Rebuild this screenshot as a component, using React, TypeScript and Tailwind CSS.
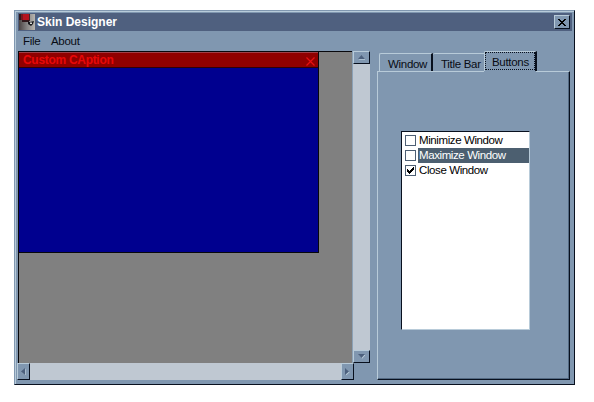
import React from "react";

const raised =
  "border border-t-[#b8cbd9] border-l-[#b8cbd9] border-r-[#08101e] border-b-[#08101e] bg-[#8097b0]";

function ScrollButton({ size, points }: { size: string; points: string }) {
  return (
    <button className={`flex shrink-0 items-center justify-center ${raised} ${size}`}>
      <svg width="7" height="7" viewBox="0 0 7 7" className="shrink-0">
        <polygon points={points} fill="#b8cbd9" transform="translate(.7 .7)" />
        <polygon points={points} fill="#4c607d" />
      </svg>
    </button>
  );
}

function AppIcon() {
  return (
    <svg width="16" height="16" viewBox="0 0 16 16" className="shrink-0">
      <defs>
        <linearGradient id="metal">
          <stop offset="0" stopColor="#4b4444" />
          <stop offset="0.5" stopColor="#858484" />
          <stop offset="1" stopColor="#b8b5af" />
        </linearGradient>
      </defs>
      <rect width="16" height="16" fill="url(#metal)" />
      <path d="M0 0h4v6H0zM3 6h7v2H3z" fill="#33181c" />
      <path d="M4 0h6v6H4z" fill="#b51420" />
      <path d="M2 0h2v6H2z" fill="#7b1820" />
      <path d="M10 0h1v7h-1z" fill="#41262a" />
      <path d="M9 7.500l2 .5 4-1-1 3-2 2-3-2z" fill="#16181c" />
      <path d="M11 8.500h2v1.500h-2z" fill="#d9d9d5" />
    </svg>
  );
}

function Option({ label, checked, selected }: { label: string; checked?: boolean; selected?: boolean }) {
  return (
    <div className="flex h-[15px] items-center pl-[3px]">
      <span className="flex size-[11px] shrink-0 items-center justify-center border border-[#4d5f74] bg-white">
        {checked && (
          <svg width="7" height="7" viewBox="0 0 7 7" shapeRendering="crispEdges">
            <path d="M0 2h1v1h1v1h1V3h1V2h1V1h1V0h1v3H6v1H5v1H4v1H3v1H2V6H1V5H0z" fill="#000" />
          </svg>
        )}
      </span>
      <span
        className={`ml-[2px] flex h-[15px] flex-1 items-center whitespace-nowrap pl-px tracking-[-0.4px] ${
          selected ? "bg-[#4c5f70] text-white" : "text-black"
        }`}
      >
        {label}
      </span>
    </div>
  );
}

export default function App() {
  return (
    <div className="h-[402px] w-[594px] overflow-hidden bg-white pl-[14px] pt-[10px] font-['Liberation_Sans',Arial,sans-serif] text-[11.5px] leading-[15px] tracking-[-0.3px] text-[#080c14]">
      <div className="h-[375px] w-[561px] border border-t-[#8097b0] border-l-[#8097b0] border-r-[#08101e] border-b-[#08101e] bg-[#8097b0]">
        <div className="flex h-[373px] flex-col border-l border-t border-[#b8cbd9] pl-[2px]">
          <header className="mr-[2px] mt-px flex h-[18px] shrink-0 items-center bg-[#4f607f] pl-[1px] pr-[2px]">
            <AppIcon />
            <span className="ml-[2px] flex-1 text-[12px] font-bold tracking-[0px] text-white">Skin Designer</span>
            <button className={`flex h-[14px] w-[16px] items-center justify-center ${raised}`}>
              <svg width="8" height="7" viewBox="0 0 8 7" shapeRendering="crispEdges">
                <path d="M0 0h2v1h1v1h2V1h1V0h2v1H7v1H6v1H5v1h1v1h1v1h1v1H6V6H5V5H3v1H2v1H0V6h1V5h1V4h1V3H2V2H1V1H0z" fill="#000" />
              </svg>
            </button>
          </header>
          <nav className="flex h-[20px] shrink-0 items-center pl-[5px]">
            <span className="w-[28px]">File</span>
            <span>About</span>
          </nav>
          <main className="flex">
            <section className="w-[352px]">
              <div className="flex h-[312px]">
                <div className="h-[312px] w-[334px] border-l border-t border-[#08080c] bg-[#808080]">
                  <div className="h-[201px] w-[300px] border-b border-r border-[#08080c] bg-[#00008f]">
                    <div className="flex h-[16px] items-center justify-between border-b border-t border-b-[#300008] border-t-[#a04048] bg-[#900000] pl-[4px] pr-[3px] text-[#e80808]">
                      <span className="pt-px text-[12px] font-bold">Custom CAption</span>
                      <svg width="9" height="9" viewBox="0 0 9 9" className="mt-[2px]">
                        <path d="M.5 0.5l8 8M8.500.5l-8 8" stroke="#e81010" strokeWidth="1.2" />
                      </svg>
                    </div>
                  </div>
                </div>
                <div className="flex w-[18px] flex-col justify-between border-l border-[#8ba1b6] bg-[#bfc8d2]">
                  <ScrollButton size="h-[13px] w-[17px]" points="3.500,1 7,5 0,5" />
                  <ScrollButton size="h-[13px] w-[17px]" points="0,1 7,1 3.500,5" />
                </div>
              </div>
              <div className="-ml-px flex h-[17px] w-[337px] justify-between bg-[#bfc8d2]">
                <ScrollButton size="h-[17px] w-[13px]" points="5,0 5,7 1,3.500" />
                <ScrollButton size="h-[17px] w-[13px]" points="1,0 5,3.500 1,7" />
              </div>
            </section>
            <section className="ml-[7px] w-[193px]">
              <div className="flex h-[20px] items-end pl-[2px]">
                <div className="flex h-[18px] w-[54px] items-center rounded-tl-[2px] border-l border-r-2 border-t border-l-[#b8cbd9] border-r-[#08101e] border-t-[#b8cbd9] pl-[8px] pt-[3px]">
                  Window
                </div>
                <div className="flex h-[18px] w-[51px] items-center whitespace-nowrap rounded-tl-[2px] border-t border-[#b8cbd9] pl-[8px] pt-[3px]">
                  Title Bar
                </div>
                <div className="h-[20px] w-[53px] rounded-tl-[2px] border-l border-r-2 border-t border-l-[#b8cbd9] border-r-[#08101e] border-t-[#b8cbd9]">
                  <div className="flex h-[18px] w-[50px] items-center border border-dotted border-[#08101e] pl-[6px] pt-[3px]">
                    Buttons
                  </div>
                </div>
              </div>
              <div className="flex h-[309px]">
                <div className="relative flex w-[193px] border-b border-l border-r border-t border-b-[#08101e] border-l-[#b8cbd9] border-r-[#08101e] border-t-[#b8cbd9] pl-[23px] pt-[59px] shadow-[inset_-1px_-1px_#536982]">
                  <span className="absolute left-[106px] top-[-1px] h-px w-[52px] bg-[#8097b0]" />
                  <div className="h-[199px] w-[129px] border border-b-[#b8cbd9] border-l-[#08101e] border-r-[#b8cbd9] border-t-[#08101e] bg-white pt-px">
                    <Option label="Minimize Window" />
                    <Option label="Maximize Window" selected />
                    <Option label="Close Window" checked />
                  </div>
                </div>
              </div>
            </section>
          </main>
        </div>
      </div>
    </div>
  );
}
